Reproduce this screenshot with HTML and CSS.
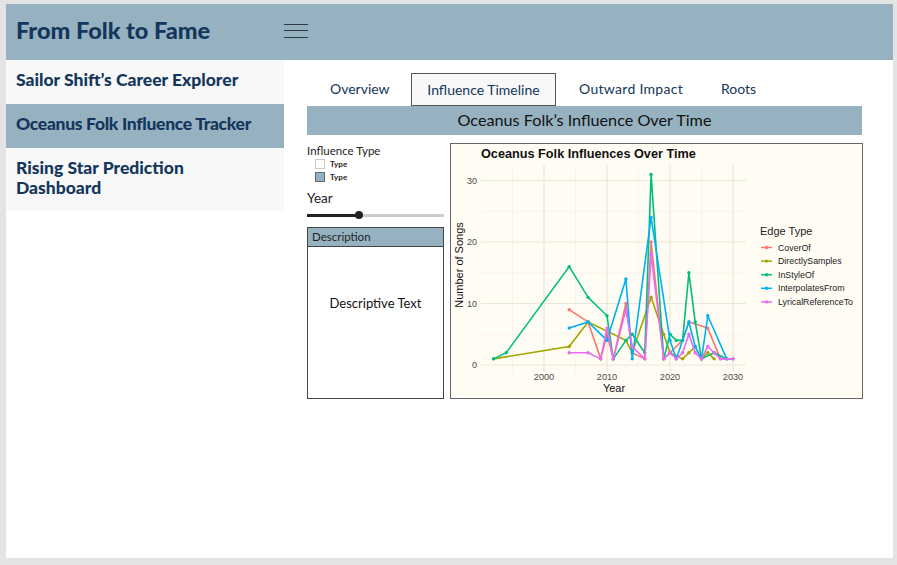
FILE: index.html
```html
<!DOCTYPE html>
<html lang="en">
  <head>
    <meta charset="UTF-8" />
    <title>From Folk to Fame</title>
    <link rel="stylesheet" href="styles.css">
    <script src="chart.js"></script>
  </head>
  <body>
    <div class="app">
      <header class="topbar">
        <h1 class="brand">From Folk to Fame</h1>
        <div class="burger"><span></span><span></span><span></span></div>
      </header>
      <div class="layout">
        <nav class="side">
          <a class="side-item">Sailor Shift’s Career Explorer</a>
          <a class="side-item active">Oceanus Folk Influence Tracker</a>
          <a class="side-item tall">Rising Star Prediction Dashboard</a>
        </nav>
        <main class="content">
          <div class="tabs">
            <a class="tab tab-overview">Overview</a>
            <a class="tab tab-active">Influence Timeline</a>
            <a class="tab tab-impact">Outward Impact</a>
            <a class="tab">Roots</a>
          </div>
          <h2 class="band">Oceanus Folk’s Influence Over Time</h2>
          <div class="panels">
            <div class="controls">
              <div class="label-type">Influence Type</div>
              <div class="check"><span class="box"></span>Type</div>
              <div class="check"><span class="box on"></span>Type</div>
              <div class="label-year">Year</div>
              <div class="slider"><div class="slider-fill"></div><div class="slider-thumb"></div></div>
              <div class="desc">
                <div class="desc-head">Description</div>
                <div class="desc-body">Descriptive Text</div>
              </div>
            </div>
            <div class="plot" id="plot"></div>
          </div>
        </main>
      </div>
    </div>
  </body>
</html>
```

FILE: styles.css
```css
* {
  margin: 0;
  padding: 0;
  box-sizing: border-box;
}
html, body {
  height: 100%;
}
body {
  background-color: #e4e4e4;
  padding: 4px 4px 7px 6px;
  font-family: "Lato", "Liberation Sans", sans-serif;
  color: #14365c;
}
.app {
  height: 100%;
  background-color: #fff;
}
.topbar {
  height: 56px;
  background-color: #96b2c0;
  display: flex;
  align-items: center;
}
.brand {
  width: 278px;
  padding: 0 0 5px 10px;
  font-size: 23.5px;
  font-weight: 900;
  color: #14365c;
}
.burger {
  width: 24px;
  margin-bottom: 3px;
  display: flex;
  flex-direction: column;
  gap: 5.5px;
}
.burger span {
  height: 1px;
  background-color: #2b3a45;
}
.layout {
  display: flex;
}
.side {
  width: 278px;
  flex-shrink: 0;
  display: flex;
  flex-direction: column;
}
.side-item {
  height: 44px;
  padding: 0 10px 4px;
  display: flex;
  align-items: center;
  background-color: #f8f8f8;
  font-size: 17.5px;
  font-weight: 900;
  line-height: 20px;
}
.side-item.active {
  background-color: #96b2c0;
  letter-spacing: -0.3px;
}
.side-item.tall {
  height: 63px;
  padding-right: 70px;
}
.content {
  width: 556px;
  margin-left: 23px;
  padding-top: 13px;
}
.tabs {
  height: 33px;
  display: flex;
  white-space: nowrap;
}
.tab {
  font-size: 14px;
  line-height: 32px;
  padding: 0 23px;
  color: #14365c;
}
.tab-active {
  background-color: #f8f8f8;
  border: 1px solid #555;
  padding: 0;
  width: 145px;
  text-align: center;
}
.tab-overview {
  width: 104px;
}
.tab-impact {
  width: 142px;
  letter-spacing: 0.3px;
}
.band {
  width: 555px;
  height: 29px;
  background-color: #96b2c0;
  text-align: center;
  font-size: 16.2px;
  font-weight: 400;
  line-height: 27px;
  color: #111;
}
.panels {
  display: flex;
  gap: 6px;
  margin-top: 8px;
}
.controls {
  width: 137px;
  flex-shrink: 0;
  color: #222;
}
.label-type {
  padding-top: 1px;
  font-size: 11.5px;
  line-height: 13px;
}
.check {
  display: flex;
  align-items: center;
  gap: 5px;
  height: 13px;
  padding-left: 8px;
  font-size: 8px;
  font-weight: 700;
}
.box {
  width: 10px;
  height: 10px;
  border: 1px solid #c8c8c8;
  background-color: #fff;
}
.box.on {
  background-color: #96b2c0;
  border-color: #666;
}
.label-year {
  font-size: 13.5px;
  line-height: 18px;
  margin-top: 6px;
}
.slider {
  position: relative;
  height: 3px;
  margin-top: 7px;
  background-color: #ccc;
}
.slider-fill {
  width: 52px;
  height: 3px;
  background-color: #222;
}
.slider-thumb {
  position: absolute;
  left: 48px;
  top: -3px;
  width: 8px;
  height: 8px;
  border-radius: 50%;
  background-color: #222;
}
.desc {
  margin-top: 10px;
  height: 172px;
  border: 1px solid #444;
  display: flex;
  flex-direction: column;
}
.desc-head {
  height: 19px;
  background-color: #96b2c0;
  border-bottom: 1px solid #444;
  padding-left: 4px;
  font-size: 11.5px;
  line-height: 18px;
}
.desc-body {
  flex: 1;
  display: flex;
  align-items: center;
  justify-content: center;
  padding-bottom: 40px;
  font-size: 13px;
  color: #111;
}
.plot {
  width: 413px;
  height: 256px;
  flex-shrink: 0;
  border: 1px solid #666;
  background-color: #fffcf4;
}
.plot svg {
  display: block;
  width: 411px;
  height: 254px;
}
.plot text {
  font-family: "Liberation Sans", Arial, sans-serif;
}
```

FILE: chart.js
```js
window.onload = function () {
  var series = [
    { name: "CoverOf", color: "#f8766d", pts: [[2004,9],[2007,7],[2009,1],[2010,5],[2011,1],[2013,10],[2014,2],[2016,1],[2017,20],[2019,1],[2020,2],[2022,4],[2023,7],[2026,6],[2028,1],[2029,1]] },
    { name: "DirectlySamples", color: "#a3a500", pts: [[1992,1],[2004,3],[2007,7],[2013,4],[2014,2],[2017,11],[2019,5],[2020,2],[2022,1],[2023,2],[2024,3],[2025,1],[2026,2],[2027,1]] },
    { name: "InStyleOf", color: "#00bf7d", pts: [[1992,1],[1994,2],[2004,16],[2007,11],[2010,8],[2011,1],[2013,4],[2014,5],[2016,2],[2017,31],[2019,1],[2020,5],[2021,4],[2022,4],[2023,15],[2024,7],[2025,1],[2027,2],[2029,1],[2030,1]] },
    { name: "InterpolatesFrom", color: "#00b0f6", pts: [[2004,6],[2007,7],[2010,4],[2013,14],[2014,1],[2017,24],[2020,4],[2021,1],[2023,7],[2024,3],[2025,1],[2026,8],[2029,1]] },
    { name: "LyricalReferenceTo", color: "#e76bf3", pts: [[2004,2],[2007,2],[2009,1],[2010,6],[2011,1],[2013,9],[2014,3],[2016,1],[2017,18],[2019,1],[2020,2],[2021,1],[2022,2],[2023,5],[2024,2],[2025,1],[2026,3],[2027,2],[2028,1],[2030,1]] }
  ];
  function px(year) { return 544 + (year - 2000) * 6.3; }
  function py(n) { return 365 - n * 6.15; }
  var left = 481, right = 746, top = 165, bottom = 372;
  var s = '<svg xmlns="http://www.w3.org/2000/svg" viewBox="451 144 411 254">';
  function line(x1, y1, x2, y2, color, w) {
    return '<line x1="' + x1 + '" y1="' + y1 + '" x2="' + x2 + '" y2="' + y2 + '" stroke="' + color + '" stroke-width="' + w + '"/>';
  }
  function text(x, y, str, size, color, extra) {
    return '<text x="' + x + '" y="' + y + '" font-size="' + size + '" fill="' + color + '" ' + (extra || "") + '>' + str + '</text>';
  }
  // grid
  var i;
  for (i = 5; i <= 25; i += 10) s += line(left, py(i), right, py(i), "#f5f1e6", 0.7);
  for (i = 1995; i <= 2025; i += 10) s += line(px(i), top, px(i), bottom, "#f5f1e6", 0.7);
  for (i = 0; i <= 30; i += 10) s += line(left, py(i), right, py(i), "#ece6d6", 1.2);
  for (i = 2000; i <= 2030; i += 10) s += line(px(i), top, px(i), bottom, "#ece6d6", 1.2);
  // lines and points
  series.forEach(function (d) {
    var p = d.pts.map(function (a) { return px(a[0]) + "," + py(a[1]); }).join(" ");
    s += '<polyline points="' + p + '" fill="none" stroke="' + d.color + '" stroke-width="1.6"/>';
    d.pts.forEach(function (a) {
      s += '<circle cx="' + px(a[0]) + '" cy="' + py(a[1]) + '" r="1.7" fill="' + d.color + '"/>';
    });
  });
  // axes
  for (i = 0; i <= 30; i += 10) s += text(477, py(i) + 3, i, 9, "#4d4d4d", 'text-anchor="end"');
  for (i = 2000; i <= 2030; i += 10) s += text(px(i), 380, i, 9.2, "#4d4d4d", 'text-anchor="middle"');
  s += text(614, 392, "Year", 11, "#111", 'text-anchor="middle"');
  s += text(0, 0, "Number of Songs", 11, "#111", 'text-anchor="middle" transform="translate(463 265) rotate(-90)"');
  s += text(481, 158, "Oceanus Folk Influences Over Time", 12.7, "#111", 'font-weight="700"');
  // legend
  s += text(760, 235, "Edge Type", 11, "#222");
  series.forEach(function (d, n) {
    var y = 247.5 + n * 13.6;
    s += line(761, y, 772, y, d.color, 1.5);
    s += '<circle cx="766.5" cy="' + y + '" r="1.7" fill="' + d.color + '"/>';
    s += text(778, y + 3, d.name, 8.8, "#222");
  });
  s += "</svg>";
  document.getElementById("plot").innerHTML = s;
};
```
